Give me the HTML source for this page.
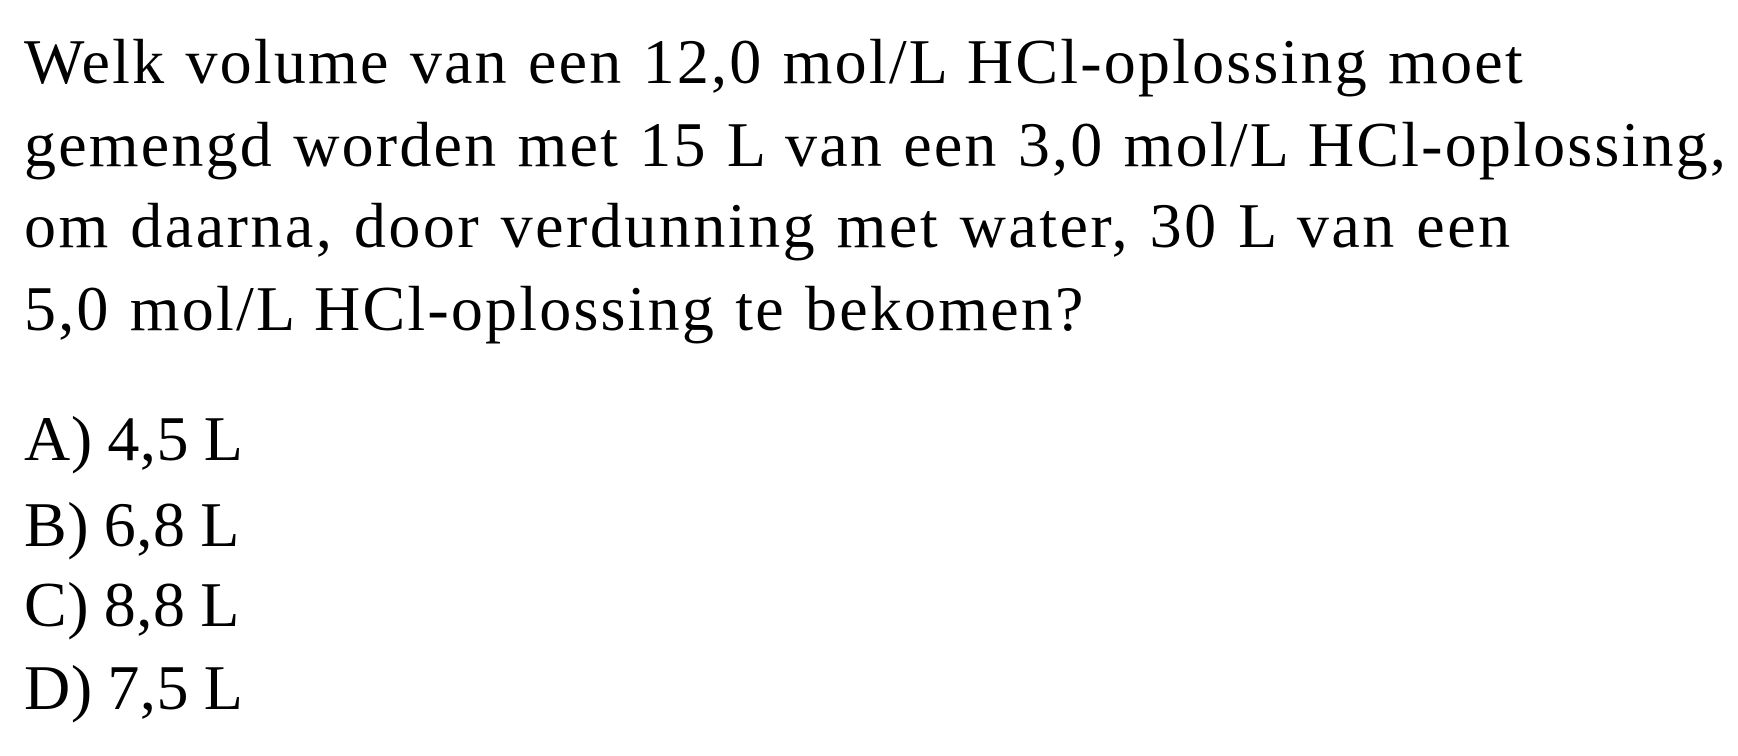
<!DOCTYPE html>
<html><head><meta charset="utf-8"><style>
html,body{margin:0;padding:0;background:#fff;width:1738px;height:756px;overflow:hidden}
.t{position:absolute;left:24px;font-family:"Liberation Serif",serif;font-size:64px;letter-spacing:2.2px;word-spacing:1px;color:#000;white-space:nowrap;line-height:1}
.o{letter-spacing:0.6px;word-spacing:-2px}
</style></head><body>
<div class="t" style="top:30px">Welk volume van een 12,0 mol/L HCl-oplossing moet</div>
<div class="t" style="top:113px">gemengd worden met 15 L van een 3,0 mol/L HCl-oplossing,</div>
<div class="t" style="top:194px;letter-spacing:2.5px">om daarna, door verdunning met water, 30 L van een</div>
<div class="t" style="top:277px">5,0 mol/L HCl-oplossing te bekomen?</div>
<div class="t o" style="top:407px">A) 4,5 L</div>
<div class="t o" style="top:493px">B) 6,8 L</div>
<div class="t o" style="top:573px">C) 8,8 L</div>
<div class="t o" style="top:656px">D) 7,5 L</div>
</body></html>
